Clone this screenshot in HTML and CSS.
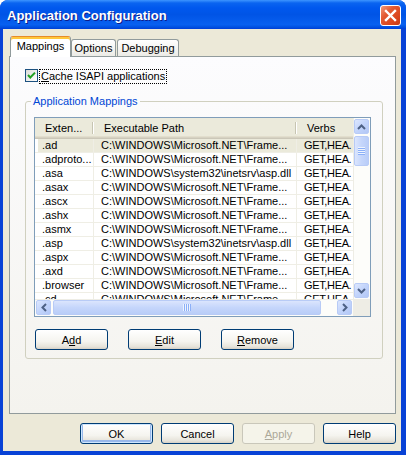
FILE: index.html
```html
<!DOCTYPE html>
<html>
<head>
  <meta charset="UTF-8">
  <title>Application Configuration</title>
  <link rel="stylesheet" href="styles.css">
</head>
<body>
  <div class="window">
    <!-- Title bar -->
    <div class="titlebar">
      <span class="title">Application Configuration</span>
      <span class="close">
        <svg width="19" height="19" viewBox="0 0 19 19"><path d="M5 5 L14 14 M14 5 L5 14" stroke="#fff" stroke-width="2.4" stroke-linecap="square"/></svg>
      </span>
    </div>

    <div class="client">
      <!-- Tabs -->
      <div class="tabs">
        <div class="tab active">Mappings</div>
        <div class="tab">Options</div>
        <div class="tab tab-gap">Debugging</div>
      </div>

      <div class="panel">
        <div class="check-row">
          <span class="checkbox">
            <svg width="11" height="11" viewBox="0 0 11 11"><polyline points="2,5 4.3,7.5 9,2.6" fill="none" stroke="#21a121" stroke-width="2"/></svg>
          </span>
          <span class="check-label"><u>C</u>ache ISAPI applications</span>
        </div>

        <fieldset class="group">
          <legend>Application Mappings</legend>

          <div class="listview">
            <div class="lv-view">
              <div class="lv-head">
                <div class="lv-col">Exten...</div>
                <div class="lv-col">Executable Path</div>
                <div class="lv-col">Verbs</div>
              </div>
              <div class="lv-row selected"><div class="lv-cell">.ad</div><div class="lv-cell">C:\WINDOWS\Microsoft.NET\Frame...</div><div class="lv-cell verbs">GET,HEA.</div></div>
              <div class="lv-row"><div class="lv-cell">.adproto...</div><div class="lv-cell">C:\WINDOWS\Microsoft.NET\Frame...</div><div class="lv-cell verbs">GET,HEA.</div></div>
              <div class="lv-row"><div class="lv-cell">.asa</div><div class="lv-cell">C:\WINDOWS\system32\inetsrv\asp.dll</div><div class="lv-cell verbs">GET,HEA.</div></div>
              <div class="lv-row"><div class="lv-cell">.asax</div><div class="lv-cell">C:\WINDOWS\Microsoft.NET\Frame...</div><div class="lv-cell verbs">GET,HEA.</div></div>
              <div class="lv-row"><div class="lv-cell">.ascx</div><div class="lv-cell">C:\WINDOWS\Microsoft.NET\Frame...</div><div class="lv-cell verbs">GET,HEA.</div></div>
              <div class="lv-row"><div class="lv-cell">.ashx</div><div class="lv-cell">C:\WINDOWS\Microsoft.NET\Frame...</div><div class="lv-cell verbs">GET,HEA.</div></div>
              <div class="lv-row"><div class="lv-cell">.asmx</div><div class="lv-cell">C:\WINDOWS\Microsoft.NET\Frame...</div><div class="lv-cell verbs">GET,HEA.</div></div>
              <div class="lv-row"><div class="lv-cell">.asp</div><div class="lv-cell">C:\WINDOWS\system32\inetsrv\asp.dll</div><div class="lv-cell verbs">GET,HEA.</div></div>
              <div class="lv-row"><div class="lv-cell">.aspx</div><div class="lv-cell">C:\WINDOWS\Microsoft.NET\Frame...</div><div class="lv-cell verbs">GET,HEA.</div></div>
              <div class="lv-row"><div class="lv-cell">.axd</div><div class="lv-cell">C:\WINDOWS\Microsoft.NET\Frame...</div><div class="lv-cell verbs">GET,HEA.</div></div>
              <div class="lv-row"><div class="lv-cell">.browser</div><div class="lv-cell">C:\WINDOWS\Microsoft.NET\Frame...</div><div class="lv-cell verbs">GET,HEA.</div></div>
              <div class="lv-row"><div class="lv-cell">.cd</div><div class="lv-cell">C:\WINDOWS\Microsoft.NET\Frame...</div><div class="lv-cell verbs">GET,HEA.</div></div>
            </div>

            <!-- vertical scrollbar -->
            <div class="vscroll">
              <div class="sb-btn"><svg width="9" height="6" viewBox="0 0 9 6"><polyline points="1,5 4.5,1.5 8,5" fill="none" stroke="#4d6185" stroke-width="2"/></svg></div>
              <div class="sb-track"><div class="thumb thumb-v"><span class="grip-v"></span></div></div>
              <div class="sb-btn"><svg width="9" height="6" viewBox="0 0 9 6"><polyline points="1,1 4.5,4.5 8,1" fill="none" stroke="#4d6185" stroke-width="2"/></svg></div>
            </div>

            <!-- horizontal scrollbar -->
            <div class="hscroll">
              <div class="sb-btn"><svg width="6" height="9" viewBox="0 0 6 9"><polyline points="5,1 1.5,4.5 5,8" fill="none" stroke="#4d6185" stroke-width="2"/></svg></div>
              <div class="sb-track sb-track-h"><div class="thumb thumb-h"><span class="grip-h"></span></div></div>
              <div class="sb-btn"><svg width="6" height="9" viewBox="0 0 6 9"><polyline points="1,1 4.5,4.5 1,8" fill="none" stroke="#4d6185" stroke-width="2"/></svg></div>
            </div>
            <div class="sb-corner"></div>
          </div>

          <div class="group-buttons">
            <button class="btn">A<u>d</u>d</button>
            <button class="btn"><u>E</u>dit</button>
            <button class="btn"><u>R</u>emove</button>
          </div>
        </fieldset>
      </div>

      <!-- Dialog buttons -->
      <div class="dlg-buttons">
        <button class="btn default">OK</button>
        <button class="btn">Cancel</button>
        <button class="btn" disabled><u>A</u>pply</button>
        <button class="btn">Help</button>
      </div>
    </div>
  </div>
</body>
</html>
```

FILE: styles.css
```css
body {
  margin: 0;
  background: #fff;
  font-family: "Liberation Sans", Arial, sans-serif;
  font-size: 11px;
  color: #000;
}

.window {
  width: 406px;
  height: 455px;
  display: flex;
  flex-direction: column;
  background: #0842d6;
  border-radius: 8px 8px 0 0;
  overflow: hidden;
}

/* Title bar */
.titlebar {
  height: 29px;
  flex: none;
  display: flex;
  align-items: center;
  justify-content: space-between;
  padding: 0 5px 0 7px;
  background: linear-gradient(to bottom, #3d95ff 0, #0a64f0 3px, #0058ee 8px, #0054e6 50%, #0860f0 85%, #0050e0 94%, #003dd7 100%);
}

.title {
  font-weight: bold;
  font-size: 13px;
  line-height: 29px;
  padding-top: 1px;
  color: #fff;
  text-shadow: 1px 1px #0f1b89;
}

.close {
  width: 21px;
  height: 21px;
  box-sizing: border-box;
  margin-top: 2px;
  border: 1px solid #fff;
  border-radius: 3px;
  background: linear-gradient(135deg, #f29a7c 0%, #e35a32 35%, #d9441c 75%, #c23a16 100%);
  display: flex;
  align-items: center;
  justify-content: center;
}

.client {
  flex: 1;
  display: flex;
  flex-direction: column;
  margin: 0 5px 4px 3px;
  padding: 7px 5px 7px 6px;
  background: #ece9d8;
}

/* Tabs */
.tabs {
  height: 20px;
  flex: none;
  display: flex;
  align-items: flex-end;
  padding-left: 1px;
}

.tab {
  height: 17px;
  box-sizing: border-box;
  padding: 2px 0 0;
  line-height: 13px;
  text-align: center;
  border: 1px solid #919b9c;
  border-bottom: none;
  border-radius: 3px 3px 0 0;
  background: linear-gradient(#fff, #ecebe6);
  width: 45px;
}

.tab.active {
  width: 61px;
  height: 21px;
  padding-top: 3px;
  margin-bottom: -1px;
  position: relative;
  z-index: 1;
  background: #fff;
  border-top-color: #e68b2c;
  box-shadow: inset 0 2px #ffc83c;
}

.tab-gap {
  width: 62px;
  margin-left: 1px;
}

.panel {
  flex: 1;
  border: 1px solid #919b9c;
  padding: 12px 12px 0 15px;
  background: linear-gradient(#fcfcfe, #f4f3ee);
}

.check-row {
  display: flex;
  align-items: flex-start;
  height: 15px;
}

.checkbox {
  width: 13px;
  height: 13px;
  box-sizing: border-box;
  border: 1px solid #1c5180;
  background: linear-gradient(135deg, #dcdcd7, #fff);
}

.checkbox svg {
  display: block;
}

.check-label {
  margin-left: 1px;
  padding: 0 1px;
  line-height: 13px;
  border: 1px dotted #000;
}

/* Group box */
.group {
  margin: 11px 0 0;
  padding: 9px 11px 8px 8px;
  border: 1px solid #d0d0bf;
  border-radius: 3px;
  min-width: 0;
}

.group legend {
  padding: 0 2px;
  margin-left: -3px;
  line-height: 13px;
  color: #0046d5;
}

/* List view */
.listview {
  display: grid;
  grid-template-columns: 318px 17px;
  grid-template-rows: 181px 17px;
  border: 1px solid #7f9db9;
  background: #fff;
  width: 337px;
  box-sizing: border-box;
}

.lv-view {
  overflow: hidden;
}

.lv-head,
.lv-row {
  display: grid;
  grid-template-columns: 59px 203px 56px;
}

.lv-head {
  height: 21px;
  background: #ebeadb;
  box-shadow: inset 0 -1px #cbc7b8, inset 0 -2px #d6d2c2, inset 0 -3px #e2decd;
}

.lv-col {
  position: relative;
  padding-left: 10px;
  line-height: 20px;
  white-space: nowrap;
}

.lv-col::after {
  content: "";
  position: absolute;
  right: 1px;
  top: 4px;
  bottom: 5px;
  width: 1px;
  background: #c7c5b2;
  box-shadow: 1px 0 #fff;
}

.lv-col:last-child::after {
  display: none;
}

.lv-row {
  height: 14px;
  box-sizing: border-box;
  border-bottom: 1px solid #efeee5;
}

.lv-cell {
  padding-left: 7px;
  line-height: 13px;
  white-space: nowrap;
  overflow: hidden;
  border-right: 1px solid #efeee5;
}

.lv-cell.verbs {
  letter-spacing: -0.35px;
  border-right: none;
}

.lv-row.selected {
  background: #ebeadb;
}

.lv-row.selected .lv-cell:first-child {
  background: linear-gradient(to right, #fff 3px, #ebeadb 3px);
}

/* Scrollbars */
.vscroll,
.hscroll {
  display: flex;
  background: #fdfdfa;
}

.vscroll {
  flex-direction: column;
  box-shadow: inset 1px 0 #eeede5;
}

.hscroll {
  box-shadow: inset 0 1px #eeede5;
}

.sb-btn {
  width: 15px;
  height: 15px;
  margin: 1px;
  flex: none;
  box-sizing: border-box;
  border: 1px solid #b8cbf6;
  border-radius: 2px;
  background: linear-gradient(135deg, #dde7fe, #c2d4fb 50%, #b2c7f6);
  display: flex;
  align-items: center;
  justify-content: center;
}

.sb-track {
  flex: 1;
  padding-top: 1px;
}

.sb-track-h {
  padding: 0 0 0 1px;
}

.thumb {
  box-sizing: border-box;
  border: 1px solid #b8cbf6;
  border-radius: 2px;
  background: linear-gradient(to right, #dbe5fd, #c5d6fb 50%, #b9cdf8);
  display: flex;
  align-items: center;
  justify-content: center;
}

.thumb-v {
  margin: 0 1px;
  height: 30px;
}

.thumb-h {
  margin: 1px 0;
  width: 268px;
  height: 15px;
  background: linear-gradient(to bottom, #dbe5fd, #c5d6fb 50%, #b9cdf8);
}

.grip-v {
  width: 7px;
  height: 8px;
  background: repeating-linear-gradient(to bottom, #eef4fe 0 1px, #8cb0f8 1px 2px);
}

.grip-h {
  width: 8px;
  height: 7px;
  background: repeating-linear-gradient(to right, #eef4fe 0 1px, #8cb0f8 1px 2px);
}

.sb-corner {
  background: #eeede5;
}

/* Buttons */
.group-buttons {
  display: flex;
  gap: 20px;
  margin: 12px 0 0 1px;
}

.dlg-buttons {
  flex: none;
  display: flex;
  justify-content: flex-end;
  gap: 8px;
  margin-top: 9px;
}

.btn {
  width: 73px;
  height: 21px;
  padding: 0;
  box-sizing: border-box;
  font-family: inherit;
  font-size: 11px;
  color: #000;
  border: 1px solid #003c74;
  border-radius: 3px;
  background: linear-gradient(#fff 0%, #f5f4ef 60%, #e6e3da 88%, #d6d0c5 100%);
}

.btn.default {
  box-shadow: inset 0 0 0 1px #cee7ff, inset 0 -1px 0 2px #98b8ea;
}

.btn:disabled {
  color: #aca899;
  border-color: #c9c7ba;
  background: #f5f4ea;
}
```
